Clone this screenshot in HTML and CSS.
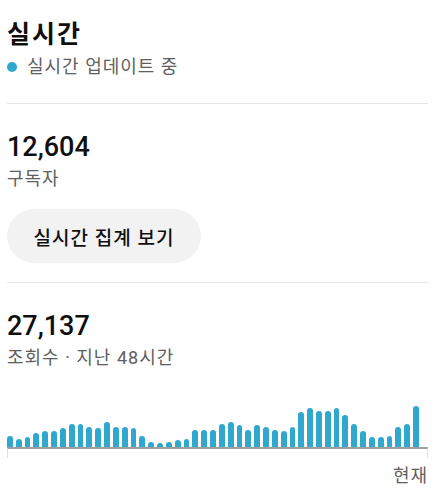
FILE: index.html
```html
<!DOCTYPE html>
<html lang="ko">

<head>
    <meta charset="UTF-8">
    <meta name="viewport" content="width=device-width, initial-scale=1.0">
    <title>실시간</title>
    <link rel="stylesheet" href="styles.css">
</head>

<body>
    <main class="panel">
        <header class="live-head">
            <h1 class="live-title">실시간</h1>
            <p class="live-status"><span class="live-dot"></span>실시간 업데이트 중</p>
        </header>

        <hr class="divider">

        <section class="stat">
            <div class="stat-value">12,604</div>
            <div class="stat-label">구독자</div>
            <button class="stat-button" type="button">실시간 집계 보기</button>
        </section>

        <hr class="divider">

        <section class="stat">
            <div class="stat-value">27,137</div>
            <div class="stat-label">조회수 · 지난 48시간</div>

            <div class="chart">
                <div class="bars" id="bars"></div>
                <div class="axis"></div>
                <div class="chart-now">현재</div>
            </div>
        </section>
    </main>
    <script>
        // views per hour, oldest first; last slot is the hour in progress
        const hourly = [11, 8, 10, 14, 16, 16, 19, 23, 23, 20, 19, 25, 20, 20, 19, 11,
            5, 4, 5, 7, 8, 17, 17, 17, 23, 25, 22, 17, 22, 20, 17, 16, 20,
            35, 39, 36, 36, 39, 32, 23, 16, 10, 10, 11, 20, 23, 41, 0];

        const bars = document.getElementById('bars');

        hourly.forEach(value => {
            const bar = document.createElement('span');
            bar.className = 'bar';
            bar.style.height = value + 'px';
            bars.appendChild(bar);
        });
    </script>
</body>

</html>
```

FILE: styles.css
```css
:root{
    --accent: #2fa7cf;
    --text: #0f0f0f;
    --muted: #606060;
    --line: #e5e5e5;
}
body {
    margin: 0;
    font-family: Roboto, "Noto Sans CJK KR", sans-serif;
    color: var(--text);
    background: #fff;
}

.panel {
    width: 421px;
    padding: 19px 0 0 7px;
}

.live-head {
    padding-bottom: 24px;
}

.live-title {
    margin: 0;
    font-size: 25px;
    line-height: 32px;
    font-weight: 700;
    letter-spacing: 2px;
}

.live-status {
    margin: 4px 0 0;
    display: flex;
    align-items: center;
    gap: 10px;
    font-size: 18px;
    line-height: 24px;
    letter-spacing: 1px;
    color: var(--muted);
}

.live-dot {
    width: 10px;
    height: 10px;
    border-radius: 50%;
    background: var(--accent);
}

.divider {
    margin: 0;
    border: 0;
    border-top: 1px solid var(--line);
}

.stat {
    padding-top: 27px;
}

.stat-value {
    font-size: 27px;
    line-height: 32px;
    font-weight: 500;
}

.stat-label {
    margin-top: 4px;
    font-size: 18px;
    line-height: 24px;
    letter-spacing: 1px;
    color: var(--muted);
}

.stat-button {
    display: block;
    margin: 18px 0 19px;
    width: 194px;
    height: 54px;
    border: 0;
    border-radius: 27px;
    background: #f2f2f2;
    font-family: inherit;
    font-size: 19px;
    font-weight: 500;
    letter-spacing: 1px;
    color: var(--text);
}

.chart {
    margin-top: 33px;
}

.bars {
    display: flex;
    align-items: flex-end;
    gap: 3px;
    height: 44px;
}

.bar {
    flex: 1;
    background: var(--accent);
    border-radius: 3px 3px 0 0;
}

.axis {
    height: 9px;
    border-top: 2px solid #9e9e9e;
    border-left: 1px solid #e0e0e0;
    border-right: 1px solid #e0e0e0;
}

.chart-now {
    margin-top: 6px;
    text-align: right;
    font-size: 18px;
    line-height: 24px;
    letter-spacing: 1px;
    color: var(--muted);
}
```
